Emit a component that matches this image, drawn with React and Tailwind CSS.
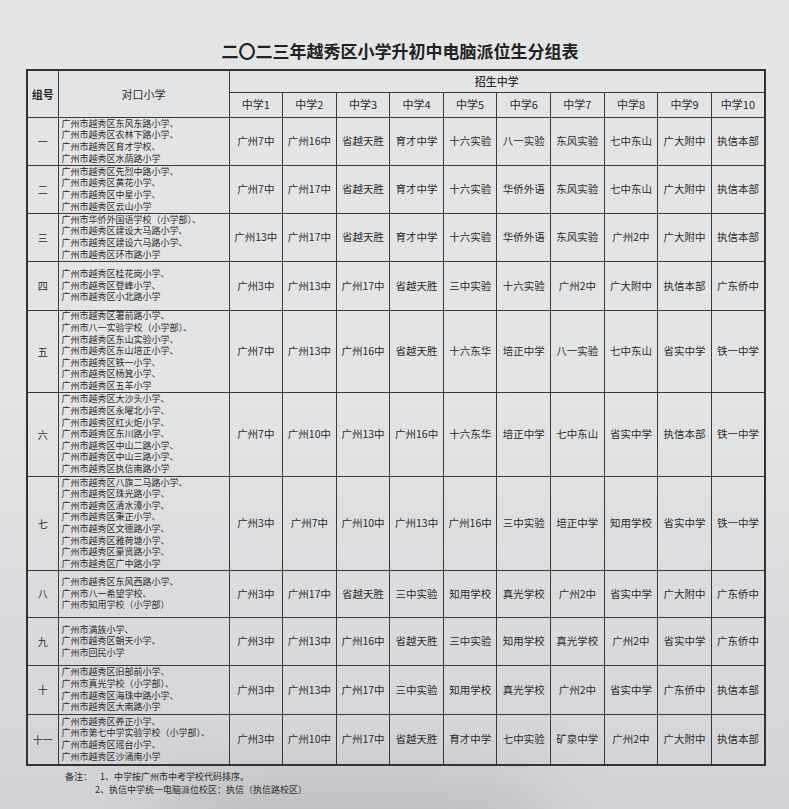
const groups = [
  {
    no: '一',
    h: 48,
    schools: ['广州市越秀区东风东路小学、', '广州市越秀区农林下路小学、', '广州市越秀区育才学校、', '广州市越秀区水荫路小学'],
    mids: ['广州7中', '广州16中', '省越天胜', '育才中学', '十六实验', '八一实验', '东风实验', '七中东山', '广大附中', '执信本部'],
  },
  {
    no: '二',
    h: 48,
    schools: ['广州市越秀区先烈中路小学、', '广州市越秀区黄花小学、', '广州市越秀区中星小学、', '广州市越秀区云山小学'],
    mids: ['广州7中', '广州17中', '省越天胜', '育才中学', '十六实验', '华侨外语', '东风实验', '七中东山', '广大附中', '执信本部'],
  },
  {
    no: '三',
    h: 48,
    schools: ['广州市华侨外国语学校（小学部）、', '广州市越秀区建设大马路小学、', '广州市越秀区建设六马路小学、', '广州市越秀区环市路小学'],
    mids: ['广州13中', '广州17中', '省越天胜', '育才中学', '十六实验', '华侨外语', '东风实验', '广州2中', '广大附中', '执信本部'],
  },
  {
    no: '四',
    h: 49,
    schools: ['广州市越秀区桂花岗小学、', '广州市越秀区登峰小学、', '广州市越秀区小北路小学'],
    mids: ['广州3中', '广州13中', '广州17中', '省越天胜', '三中实验', '十六实验', '广州2中', '广大附中', '执信本部', '广东侨中'],
  },
  {
    no: '五',
    h: 82,
    schools: ['广州市越秀区署前路小学、', '广州市八一实验学校（小学部）、', '广州市越秀区东山实验小学、', '广州市越秀区东山培正小学、', '广州市越秀区铁一小学、', '广州市越秀区杨箕小学、', '广州市越秀区五羊小学'],
    mids: ['广州7中', '广州13中', '广州16中', '省越天胜', '十六东华', '培正中学', '八一实验', '七中东山', '省实中学', '铁一中学'],
  },
  {
    no: '六',
    h: 84,
    schools: ['广州市越秀区大沙头小学、', '广州市越秀区永曜北小学、', '广州市越秀区红火炬小学、', '广州市越秀区东川路小学、', '广州市越秀区中山二路小学、', '广州市越秀区中山三路小学、', '广州市越秀区执信南路小学'],
    mids: ['广州7中', '广州10中', '广州13中', '广州16中', '十六东华', '培正中学', '七中东山', '省实中学', '执信本部', '铁一中学'],
  },
  {
    no: '七',
    h: 94,
    schools: ['广州市越秀区八旗二马路小学、', '广州市越秀区珠光路小学、', '广州市越秀区清水濠小学、', '广州市越秀区秉正小学、', '广州市越秀区文德路小学、', '广州市越秀区雅荷塘小学、', '广州市越秀区豪贤路小学、', '广州市越秀区广中路小学'],
    mids: ['广州3中', '广州7中', '广州10中', '广州13中', '广州16中', '三中实验', '培正中学', '知用学校', '省实中学', '铁一中学'],
  },
  {
    no: '八',
    h: 47,
    schools: ['广州市越秀区东风西路小学、', '广州市八一希望学校、', '广州市知用学校（小学部）'],
    mids: ['广州3中', '广州17中', '省越天胜', '三中实验', '知用学校', '真光学校', '广州2中', '省实中学', '广大附中', '广东侨中'],
  },
  {
    no: '九',
    h: 48,
    schools: ['广州市满族小学、', '广州市越秀区朝天小学、', '广州市回民小学'],
    mids: ['广州3中', '广州13中', '广州16中', '省越天胜', '三中实验', '知用学校', '真光学校', '广州2中', '省实中学', '广东侨中'],
  },
  {
    no: '十',
    h: 49,
    schools: ['广州市越秀区旧部前小学、', '广州市真光学校（小学部）、', '广州市越秀区海珠中路小学、', '广州市越秀区大南路小学'],
    mids: ['广州3中', '广州13中', '广州17中', '三中实验', '知用学校', '真光学校', '广州2中', '省实中学', '广东侨中', '执信本部'],
  },
  {
    no: '十一',
    h: 50,
    schools: ['广州市越秀区养正小学、', '广州市第七中学实验学校（小学部）、', '广州市越秀区瑶台小学、', '广州市越秀区沙涌南小学'],
    mids: ['广州3中', '广州10中', '广州17中', '省越天胜', '育才中学', '七中实验', '矿泉中学', '广州2中', '广大附中', '执信本部'],
  },
]

const heads = ['中学1', '中学2', '中学3', '中学4', '中学5', '中学6', '中学7', '中学8', '中学9', '中学10']

function App() {
  return (
    <div
      className="relative w-[789px] h-[809px] overflow-hidden bg-gradient-to-b from-[#e4e5e7] via-[#e3e4e6] to-[#d2d3d6] text-[#2b2b2b]"
      style={{ fontFamily: '"Noto Sans CJK SC", "Noto Sans", sans-serif' }}
    >
      {/* shadow at the bottom of the photo */}
      <div className="absolute left-[160px] top-[796px] w-[380px] h-[60px] rounded-full bg-[#9a9b9f] blur-2xl opacity-60" />

      <div className="relative pt-[41px]">
        <h1 className="w-[740px] ml-[30px] text-center text-[17px] leading-[20px] font-bold text-[#222]">
          二〇二三年越秀区小学升初中电脑派位生分组表
        </h1>

        <table className="mt-[8px] ml-[26px] w-[740px] table-fixed border-collapse border-2 border-[#333]">
          <colgroup>
            <col className="w-[31px]" />
            <col className="w-[171px]" />
            {heads.map(h => (
              <col key={h} />
            ))}
          </colgroup>
          <thead>
            <tr className="h-[22px]">
              <th rowSpan={2} className="border border-[#3a3a3a] text-[11px] font-semibold">组号</th>
              <th rowSpan={2} className="border border-[#3a3a3a] text-[11px] font-normal">对口小学</th>
              <th colSpan={10} className="border border-[#3a3a3a] text-[11px] font-medium">招生中学</th>
            </tr>
            <tr className="h-[25px]">
              {heads.map(h => (
                <th key={h} className="border border-[#3a3a3a] text-[11px] font-normal">{h}</th>
              ))}
            </tr>
          </thead>
          <tbody>
            {groups.map(g => (
              <tr key={g.no}>
                <td className="border border-[#3a3a3a] p-0 text-center text-[10px]">{g.no}</td>
                <td className="border border-[#3a3a3a] p-0">
                  <div
                    className="flex flex-col justify-center overflow-hidden pl-[3px] text-[9px] leading-[11.6px] whitespace-nowrap"
                    style={{ height: g.h - 1 }}
                  >
                    {g.schools.map(s => (
                      <span key={s}>{s}</span>
                    ))}
                  </div>
                </td>
                {g.mids.map((m, i) => (
                  <td key={i} className="border border-[#3a3a3a] p-0 text-center text-[10.5px] whitespace-nowrap">
                    {m}
                  </td>
                ))}
              </tr>
            ))}
          </tbody>
        </table>

        <div className="mt-[4px] text-[9px] leading-[13px]">
          <div className="flex">
            <span className="ml-[65px] w-[35px]">备注：</span>
            <span>1、中学按广州市中考学校代码排序。</span>
          </div>
          <div className="ml-[95px]">2、执信中学统一电脑派位校区：执信（执信路校区）</div>
        </div>
      </div>
    </div>
  )
}

export default App
